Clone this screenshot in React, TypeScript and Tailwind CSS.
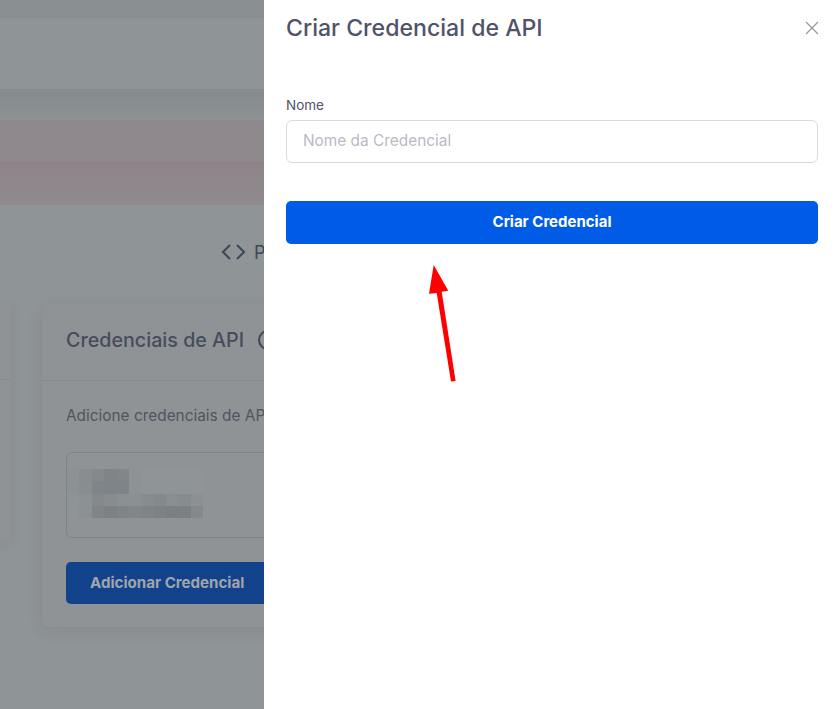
const font = 'font-["Inter","Liberation_Sans",sans-serif]'

const mosaic = [
  ['#8c9194', '#888d90', '#84898c', '#7f8488', '#81868a', '#8d9295', '#8f9497', '#8f9497', '#8f9497', '#8f9497', '#8f9497'],
  ['#8c9194', '#898e91', '#80858a', '#7f8488', '#7f8488', '#8d9295', '#8f9497', '#8f9497', '#8f9497', '#8f9497', '#8f9497'],
  ['#8e9396', '#8c9194', '#85898d', '#878c8f', '#8b9093', '#8b9093', '#878c8f', '#84898c', '#898e91', '#878c8f', '#8b9093'],
  ['#8e9396', '#8b9093', '#7f8488', '#7c8185', '#7f8488', '#81868a', '#7f8488', '#7d8286', '#7a7f84', '#7b8084', '#85898d'],
]

function Mosaic() {
  return (
    <div className="mt-[16px] flex flex-col">
      {mosaic.map((row, i) => (
        <div key={i} className="flex h-[12.25px]">
          {row.map((c, j) => (
            <div key={j} className="w-[12.4px]" style={{ background: c }} />
          ))}
        </div>
      ))}
    </div>
  )
}

function Background() {
  return (
    <div className={`w-[264px] h-[709px] shrink-0 overflow-hidden bg-[#8f9497] ${font}`}>
      <div className="h-[18px] bg-[#898e91]" />
      <div className="h-[71px] bg-[#8f9497]" />
      <div className="h-[31px] bg-gradient-to-b from-[#868b8d] to-[#8c9194]" />
      <div className="h-[41px] bg-[#8f898d]" />
      <div className="h-[44px] bg-gradient-to-b from-[#8d8488] to-[#8f8a8e]" />

      <div className="h-[99px] pl-[221px] pt-[36px] flex items-start gap-[8px] w-[400px]">
        <svg width="25" height="18" viewBox="0 0 25 18" fill="none" stroke="#3f4558" strokeWidth="2" className="mt-[2px] shrink-0">
          <path d="M9 2 2 9l7 7M16 2l7 7-7 7" />
        </svg>
        <span className="text-[18px] leading-[24px] text-[#3f4558]">Playground</span>
      </div>

      <div className="flex items-start w-[700px]">
        <div className="w-[11px] h-[237px] shrink-0 rounded-br-[6px] bg-[#8f9396] shadow-[0_2px_14px_rgba(0,0,0,0.08)]">
          <div className="h-[76px] border-b border-[#868b94]" />
        </div>
        <div className="ml-[31px] w-[600px] h-[323px] rounded-[6px] bg-[#8f9396] shadow-[0_4px_18px_rgba(0,0,0,0.07)]">
          <div className="h-[77px] pl-[24px] pb-[4px] border-b border-[#868a96] flex items-center gap-[14px]">
            <span className="text-[19.7px] leading-[26px] font-medium text-[#474c5d]">Credenciais de API</span>
            <span className="w-[20px] h-[20px] rounded-full border-2 border-[#3f4558]" />
          </div>
          <div className="px-[24px]">
            <p className="mt-[24px] text-[15.4px] leading-[22px] text-[#50555f]">Adicione credenciais de API para acessar</p>
            <div className="mt-[25px] h-[86px] w-[500px] rounded-[6px] border border-[#7f8487]">
              <Mosaic />
            </div>
            <button className="mt-[24px] h-[42px] w-[204px] rounded-[5px] bg-[#12428c] text-left pl-[24px] text-[15.1px] font-bold text-[#a0a5aa]">
              Adicionar Credencial
            </button>
          </div>
        </div>
      </div>
    </div>
  )
}

function Drawer() {
  return (
    <div className={`flex-1 h-[709px] bg-white pl-[22px] pr-[22px] ${font}`}>
      <div className="flex items-start justify-between">
        <h2 className="mt-[12px] text-[23.1px] leading-[32px] font-medium text-[#50526a]">Criar Credencial de API</h2>
        <button className="mt-[20px] mr-[-2px] w-[16px] h-[16px]">
          <svg width="16" height="16" viewBox="0 0 16 16" fill="none" stroke="#9a9a9a" strokeWidth="1.3">
            <path d="M2 2l12 12M14 2 2 14" />
          </svg>
        </button>
      </div>
      <label className="block mt-[51px] text-[13.5px] leading-[20px] text-[#50526a]">Nome</label>
      <input
        placeholder="Nome da Credencial"
        className="mt-[5px] block w-full h-[43px] rounded-[6px] border border-[#d9d9e3] px-[16px] pb-[2px] text-[15.4px] placeholder:text-[#b9bac6]"
      />
      <button className="mt-[38px] w-full h-[43px] rounded-[5px] bg-[#005ce6] text-[15px] font-bold text-white">
        Criar Credencial
      </button>
    </div>
  )
}

export default function App() {
  return (
    <div className="relative flex w-[840px] h-[709px] overflow-hidden">
      <Background />
      <Drawer />
      {/* annotation arrow */}
      <svg className="absolute left-[420px] top-[260px]" width="50" height="125" viewBox="0 0 50 125">
        <path d="M13.700 5 28.300 30.700 21.700 31.800 35.600 121 31 121.500 16.700 33 9 33.700Z" fill="#ff0000" />
      </svg>
    </div>
  )
}
